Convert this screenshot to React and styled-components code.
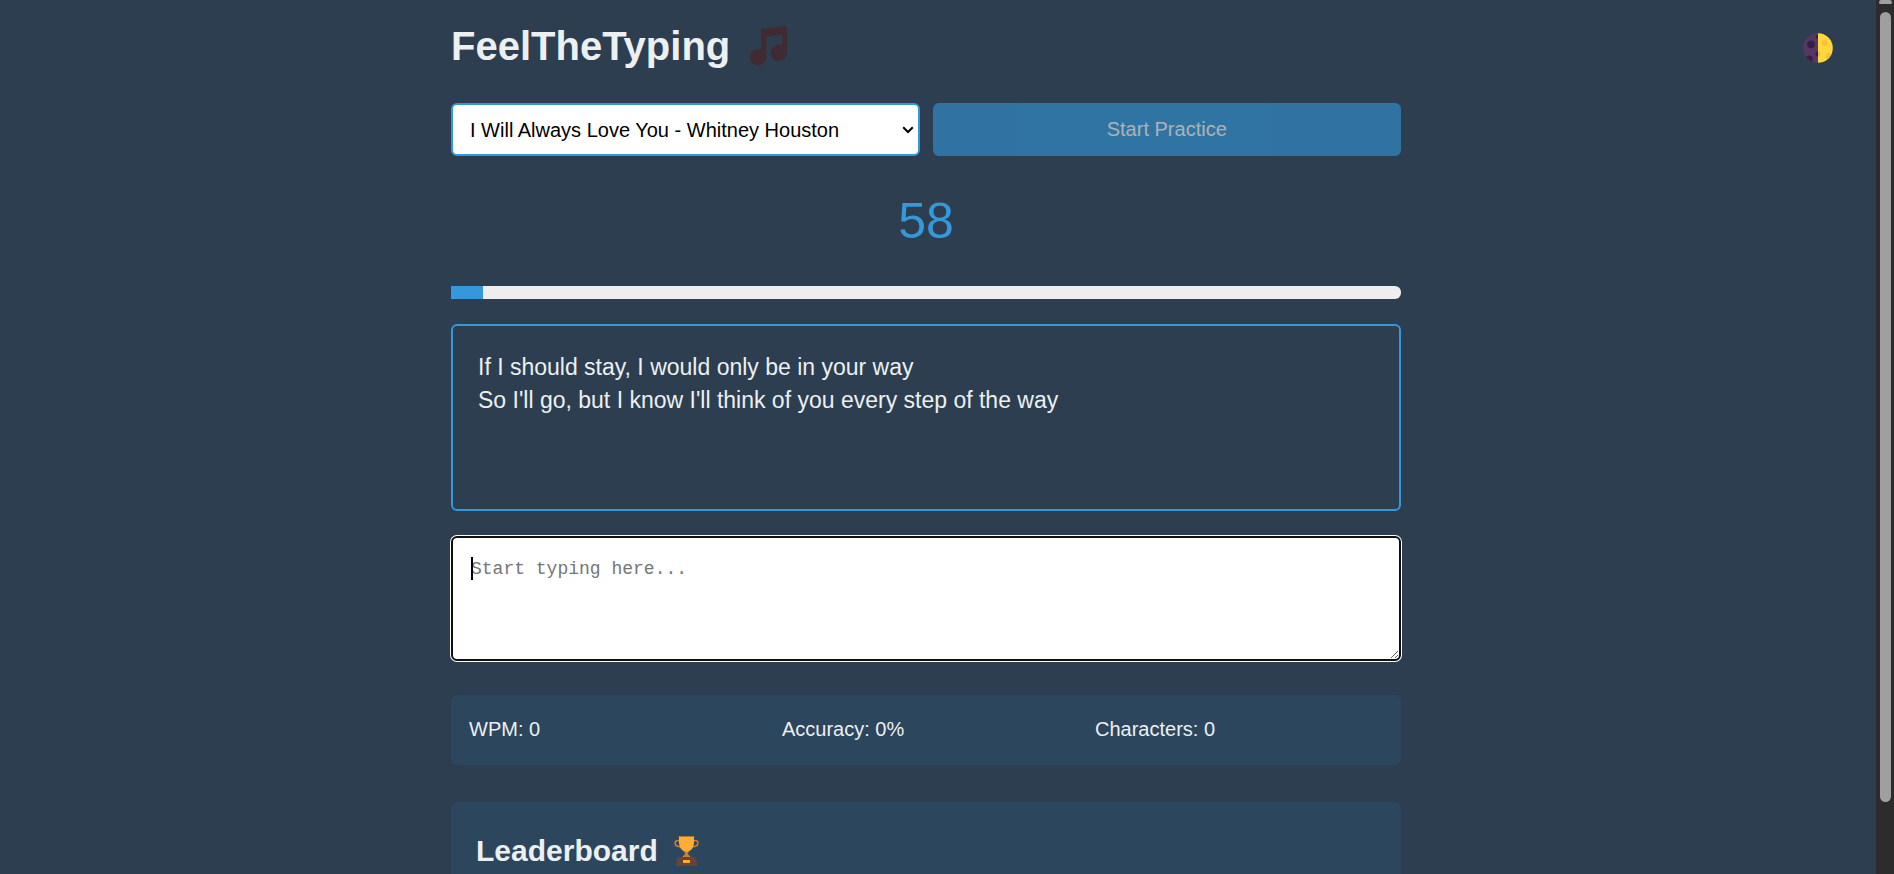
import React from "react";
import styled, { createGlobalStyle } from "styled-components";

const GlobalStyle = createGlobalStyle`
  *, *::before, *::after { box-sizing: border-box; }
  body {
    margin: 0;
    background: #2c3e50;
    color: #ecf0f1;
    font-family: "Liberation Sans", Arial, sans-serif;
    font-size: 20px;
  }
`;

const Shell = styled.div`
  display: flex;
  height: 100vh;
`;

const ScrollArea = styled.div`
  flex: 1;
  min-width: 0;
  overflow-y: auto;
  scrollbar-width: none;
  display: grid;
  grid-template-columns: 1fr minmax(0, 950px) 1fr;
  align-items: start;
  padding: 24px 24px 24px 0;
`;

const Scrollbar = styled.div`
  flex: none;
  width: 18px;
  display: flex;
  flex-direction: column;
  align-items: center;
  gap: 8px;
  background: #2c2c2c;
`;

const ScrollArrow = styled.div`
  width: 13px;
  height: 4px;
  border-radius: 3px 3px 2px 2px;
  background: #9f9f9f;
`;

const ScrollThumb = styled.div`
  width: 11px;
  height: 90.4%;
  border-radius: 6px;
  background: #9f9f9f;
`;

const Main = styled.main`
  grid-column: 2;
  display: flex;
  flex-direction: column;
`;

const Title = styled.h1`
  display: flex;
  align-items: center;
  gap: 20px;
  margin: 0 0 35px;
  font-size: 40px;
  line-height: 44px;
`;

const ThemeToggle = styled.button`
  grid-column: 3;
  justify-self: end;
  display: flex;
  margin: 9px 19px 0 0;
  padding: 0;
  border: 0;
  background: none;
  cursor: pointer;
`;

const Controls = styled.div`
  display: grid;
  grid-template-columns: 1fr 1fr;
  gap: 13px;
`;

const SelectBox = styled.div`
  position: relative;
  display: flex;
  color: #000;

  svg {
    position: absolute;
    top: 22px;
    right: 6px;
    pointer-events: none;
  }
`;

const SongSelect = styled.select`
  appearance: none;
  width: 100%;
  height: 53px;
  padding: 0 24px 0 17px;
  border: 2px solid #3498db;
  border-radius: 6px;
  background-color: #fff;
  color: inherit;
  font: inherit;
`;

const StartButton = styled.button`
  height: 53px;
  border: 0;
  border-radius: 6px;
  background: #3498db;
  color: #fff;
  font: inherit;
  opacity: 0.6;
`;

const Timer = styled.div`
  margin: 40px 0;
  color: #3498db;
  font-size: 50px;
  line-height: 50px;
  text-align: center;
`;

const Track = styled.div`
  height: 13px;
  border-radius: 0 6px 6px 0;
  background: #eee;
  overflow: hidden;
`;

const Fill = styled.div`
  height: 100%;
  background: #3498db;
`;

const Lyrics = styled.div`
  min-height: 187px;
  margin-top: 25px;
  padding: 25px;
  border: 2px solid #3498db;
  border-radius: 6px;
  font-size: 23px;
  line-height: 33px;
  white-space: pre-line;
`;

const Editor = styled.div`
  position: relative;
  display: flex;
  margin-top: 25px;
`;

const Input = styled.textarea`
  width: 100%;
  height: 125px;
  padding: 18px;
  border: 2px solid #101010;
  border-radius: 6px;
  box-shadow: 0 0 0 1px #fff;
  outline: none;
  background: #fff;
  color: #000;
  caret-color: transparent;
  font-family: "Liberation Mono", monospace;
  font-size: 18px;
  line-height: 26px;
  resize: vertical;
  &::placeholder { color: #757575; }
`;

const Caret = styled.span`
  position: absolute;
  top: 21px;
  left: 20px;
  width: 2px;
  height: 23px;
  background: #000;
`;

const Stats = styled.div`
  display: grid;
  grid-template-columns: repeat(3, 1fr);
  gap: 25px;
  margin-top: 34px;
  padding: 23px 18px 24px;
  border-radius: 6px;
  background: rgba(52, 152, 219, 0.1);
  line-height: 23px;
`;

const Leaderboard = styled.section`
  min-height: 250px;
  margin-top: 37px;
  padding: 32px 25px;
  border-radius: 6px;
  background: rgba(52, 152, 219, 0.1);
`;

const SectionTitle = styled.h2`
  display: flex;
  align-items: center;
  gap: 16px;
  margin: 0;
  font-size: 30px;
  line-height: 34px;
`;

const ChevronIcon = () => (
  <svg width="12" height="10" viewBox="0 0 12 10" fill="none" stroke="currentColor" strokeWidth="2" aria-hidden="true">
    <path d="M1.2 2.2L6 7L10.8 2.2" />
  </svg>
);

const NotesIcon = () => (
  <svg width="38" height="40" viewBox="0 0 38 40" fill="#412b33" aria-hidden="true">
    <path d="M11 4.3 Q11 3.2 12.2 3 L35.8 0 Q37 0 37 1.2 V27 A8.2 8.2 0 1 1 32 19.3 V8.7 L16.3 10.7 V31.3 A8.2 8.2 0 1 1 11 23.6 Z" />
  </svg>
);

const MoonIcon = () => (
  <svg width="30" height="30" viewBox="0 0 30 30" aria-hidden="true">
    <clipPath id="disc"><circle cx="15" cy="15" r="14.8" /></clipPath>
    <clipPath id="dark"><path d="M0 0H15V30H0Z" /></clipPath>
    <g clipPath="url(#disc)">
      <path d="M15 0H30V30H15Z" fill="#ffd83b" />
      <g fill="#fbbf3a">
        <circle cx="15" cy="20.8" r="2.9" />
        <circle cx="21.7" cy="10" r="2.8" />
        <circle cx="26" cy="23.3" r="3.3" />
      </g>
      <g clipPath="url(#dark)">
        <path d="M0 0H15V30H0Z" fill="#553765" />
        <g fill="#371f42">
          <circle cx="8" cy="11.3" r="3.9" />
          <circle cx="14.6" cy="4" r="1.9" />
          <circle cx="15" cy="20.8" r="2.6" />
          <circle cx="6.3" cy="26" r="3.5" />
        </g>
      </g>
    </g>
  </svg>
);

const TrophyIcon = () => (
  <svg width="25" height="30" viewBox="0 0 25 30" aria-hidden="true">
    <g fill="none" stroke="#c97d35" strokeWidth="1.6">
      <path d="M5.4 4.8C2.6 4 .9 5.2 1.1 7.4C1.4 9.8 4.6 10.8 7.6 10.6" />
      <path d="M19.6 4.8C22.4 4 24.1 5.2 23.9 7.4C23.6 9.8 20.4 10.8 17.4 10.6" />
    </g>
    <path d="M10.5 15H14.5V16.6L13.9 18.2L16.4 20.2V21H8.6V20.2L11.1 18.2L10.5 16.6Z" fill="#c97d35" />
    <path d="M5 .6H20V6C20 11.3 17 15.8 12.5 15.8S5 11.3 5 6Z" fill="#ffac33" />
    <path d="M4 .2H21V1H4Z" fill="#c97d35" opacity=".5" />
    <path d="M3.4 21H21.6L23.6 30H1.4Z" fill="#6b4336" />
    <path d="M9 24H16V27H9Z" fill="#ffac33" />
  </svg>
);

const lyrics =
  "If I should stay, I would only be in your way\nSo I'll go, but I know I'll think of you every step of the way";
const totalSeconds = 60;
const secondsLeft = 58;

export default function App() {
  const elapsed = ((totalSeconds - secondsLeft) / totalSeconds) * 100;
  return (
    <>
      <GlobalStyle />
      <Shell>
        <ScrollArea>
          <Main>
            <Title>FeelTheTyping <NotesIcon /></Title>
            <Controls>
              <SelectBox>
                <SongSelect aria-label="Song">
                  <option>I Will Always Love You - Whitney Houston</option>
                </SongSelect>
                <ChevronIcon />
              </SelectBox>
              <StartButton type="button" disabled>Start Practice</StartButton>
            </Controls>
            <Timer role="timer">{secondsLeft}</Timer>
            <Track>
              <Fill style={{ width: `${elapsed}%` }} />
            </Track>
            <Lyrics>{lyrics}</Lyrics>
            <Editor>
              <Input aria-label="Typing area" placeholder="Start typing here..." />
              <Caret />
            </Editor>
            <Stats>
              <div>WPM: 0</div>
              <div>Accuracy: 0%</div>
              <div>Characters: 0</div>
            </Stats>
            <Leaderboard>
              <SectionTitle>Leaderboard <TrophyIcon /></SectionTitle>
            </Leaderboard>
          </Main>
          <ThemeToggle type="button" aria-label="Toggle theme"><MoonIcon /></ThemeToggle>
        </ScrollArea>
        <Scrollbar aria-hidden="true">
          <ScrollArrow />
          <ScrollThumb />
        </Scrollbar>
      </Shell>
    </>
  );
}
